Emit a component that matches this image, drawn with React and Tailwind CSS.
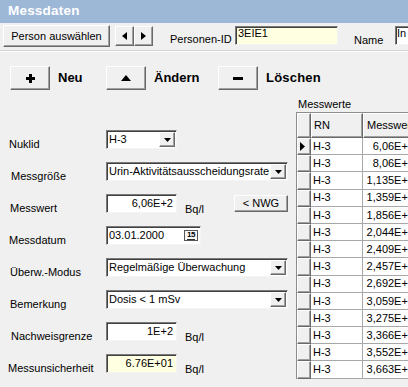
import React from "react";

const sunken =
  "border border-t-[#7a7a7a] border-l-[#7a7a7a] border-r-[#f4f4f4] border-b-[#f4f4f4] shadow-[inset_1px_1px_0_#404040]";
const raised =
  "border border-t-white border-l-white border-r-[#696969] border-b-[#696969] shadow-[inset_-1px_-1px_0_#a0a0a0]";

function DropBtn() {
  return (
    <div className={`w-[16px] h-full bg-[#f0f0f0] ${raised} flex items-center justify-center shrink-0`}>
      <svg width="7" height="4" viewBox="0 0 7 4">
        <polygon points="0,0 7,0 3.5,4" fill="#000" />
      </svg>
    </div>
  );
}

function Select({ className, text }) {
  return (
    <div className={`h-[19px] shrink-0 bg-white ${sunken} flex items-stretch p-[1px] ${className}`}>
      <div className="flex-1 pl-[1px] leading-[15px] text-[11px] whitespace-nowrap overflow-hidden">{text}</div>
      <DropBtn />
    </div>
  );
}

function Input({ className, text, bg = "bg-white" }) {
  return (
    <div className={`h-[19px] shrink-0 ${bg} ${sunken} flex items-center justify-end pr-[3px] text-[11px] ${className}`}>
      {text}
    </div>
  );
}

function Row({ label, lpad, children }) {
  return (
    <div className="h-[32px] flex items-start">
      <div className={`w-[106px] shrink-0 pt-[8px] leading-[13px] text-[11px] whitespace-nowrap ${lpad}`}>{label}</div>
      {children}
    </div>
  );
}

const vals = [
  "6,06E+2",
  "8,06E+2",
  "1,135E+3",
  "1,359E+3",
  "1,856E+3",
  "2,044E+3",
  "2,409E+3",
  "2,457E+3",
  "2,692E+3",
  "3,059E+3",
  "3,275E+3",
  "3,366E+3",
  "3,552E+3",
  "3,663E+3",
];

export default function App() {
  return (
    <div className="w-[408px] h-[387px] overflow-hidden bg-[#f0f0f0] text-black font-['Liberation_Sans',Arial,sans-serif] text-[11px]">
      {/* Title */}
      <div className="h-[23px] bg-[#9db7d6] flex items-center pl-[8px] text-white font-bold text-[13.5px] tracking-[0.2px]">
        Messdaten
      </div>

      {/* Toolbar */}
      <div className="h-[28px] flex items-start border-b border-[#d4d4d4] shadow-[0_1px_0_#ffffff] whitespace-nowrap overflow-hidden">
        <div className={`ml-[3px] mt-[2px] w-[107px] h-[22px] shrink-0 bg-[#f0f0f0] ${raised} flex items-center justify-center text-[11px]`}>
          Person auswählen
        </div>
        <div className={`ml-[5px] mt-[3px] w-[19px] h-[20px] shrink-0 bg-[#f0f0f0] ${raised} flex items-center justify-center`}>
          <svg width="5" height="8" viewBox="0 0 5 8">
            <polygon points="5,0 5,8 0,4" fill="#000" />
          </svg>
        </div>
        <div className={`mt-[3px] w-[19px] h-[20px] shrink-0 bg-[#f0f0f0] ${raised} flex items-center justify-center`}>
          <svg width="5" height="8" viewBox="0 0 5 8">
            <polygon points="0,0 0,8 5,4" fill="#000" />
          </svg>
        </div>
        <div className="ml-[17px] mt-[10px] w-[65px] shrink-0 leading-[13px]">Personen-ID</div>
        <div className={`mt-[3px] w-[103px] h-[19px] shrink-0 bg-[#ffffe1] ${sunken} pl-[2px] leading-[12px] text-[11px]`}>3EIE1</div>
        <div className="ml-[16px] mt-[11px] w-[41px] shrink-0 leading-[13px]">Name</div>
        <div className={`mt-[3px] w-[40px] h-[19px] bg-white ${sunken} pl-[1px] leading-[12px] text-[11px] shrink-0`}>In</div>
      </div>

      {/* Action row */}
      <div className="mt-[15px] h-[24px] flex items-center whitespace-nowrap">
        <div className={`ml-[10px] w-[40px] h-[24px] shrink-0 bg-[#f0f0f0] ${raised} flex items-center justify-center`}>
          <svg width="9" height="9" viewBox="0 0 9 9">
            <rect x="3" y="0" width="3" height="9" fill="#000" />
            <rect x="0" y="3" width="9" height="3" fill="#000" />
          </svg>
        </div>
        <div className="ml-[8px] w-[48px] shrink-0 font-bold text-[13px] leading-[16px]">Neu</div>
        <div className={`w-[40px] h-[24px] shrink-0 bg-[#f0f0f0] ${raised} flex items-center justify-center`}>
          <svg width="10" height="6" viewBox="0 0 10 6">
            <polygon points="0,6 10,6 5,0" fill="#000" />
          </svg>
        </div>
        <div className="ml-[8px] w-[64px] shrink-0 font-bold text-[13px] leading-[16px]">Ändern</div>
        <div className={`w-[40px] h-[24px] shrink-0 bg-[#f0f0f0] ${raised} flex items-center justify-center`}>
          <svg width="10" height="3" viewBox="0 0 10 3">
            <rect x="0" y="0" width="10" height="3" fill="#000" />
          </svg>
        </div>
        <div className="ml-[8px] font-bold text-[13px] leading-[16px] tracking-[0.2px]">Löschen</div>
      </div>

      {/* Body */}
      <div className="flex">
        {/* Form */}
        <div className="w-[296px] pt-[40px] shrink-0">
          <Row label="Nuklid" lpad="pl-[9px]">
            <Select className="w-[71px]" text="H-3" />
          </Row>
          <Row label="Messgröße" lpad="pl-[11px]">
            <Select className="w-[182px]" text="Urin-Aktivitätsausscheidungsrate" />
          </Row>
          <Row label="Messwert" lpad="pl-[10px]">
            <Input className="w-[71px]" text="6,06E+2" />
            <div className="ml-[8px] mt-[9px] leading-[13px]">Bq/l</div>
            <div className={`ml-[30px] mt-[1px] w-[54px] h-[17px] shrink-0 bg-[#f0f0f0] ${raised} flex items-center justify-center`}>
              &lt; NWG
            </div>
          </Row>
          <Row label="Messdatum" lpad="pl-[9px]">
            <div className={`w-[95px] h-[19px] shrink-0 bg-white ${sunken} flex items-center pl-[2px] text-[11px]`}>
              <span className="flex-1">03.01.2000</span>
              <div className="mr-[2px] w-[14px] h-[11px] border border-[#555] bg-[#f8f8f8] flex items-center justify-center">
                <span className="text-[8px] font-bold leading-[8px] tracking-[-0.5px] border-b border-[#333]">15</span>
              </div>
            </div>
          </Row>
          <Row label="Überw.-Modus" lpad="pl-[10px]">
            <Select className="w-[182px]" text="Regelmäßige Überwachung" />
          </Row>
          <Row label="Bemerkung" lpad="pl-[10px]">
            <Select className="w-[182px]" text="Dosis < 1 mSv" />
          </Row>
          <Row label="Nachweisgrenze" lpad="pl-[11px]">
            <Input className="w-[71px]" text="1E+2" />
            <div className="ml-[8px] mt-[9px] leading-[13px]">Bq/l</div>
          </Row>
          <Row label="Messunsicherheit" lpad="pl-[8px]">
            <Input className="w-[71px]" text="6.76E+01" bg="bg-[#ffffe1]" />
            <div className="ml-[8px] mt-[9px] leading-[13px]">Bq/l</div>
          </Row>
        </div>

        {/* Grid */}
        <div className="w-[112px] shrink-0 overflow-hidden">
          <div className="mt-[8px] pl-[2px] leading-[13px] whitespace-nowrap">Messwerte</div>
          <div className="mt-[1px] w-[130px] border-l border-t border-[#8c8c8c]">
            <div className="flex h-[25px]">
              <div className={`w-[14px] h-full shrink-0 bg-[#f0f0f0] ${raised}`} />
              <div className={`w-[52px] h-full shrink-0 bg-[#f0f0f0] ${raised} pl-[2px] flex items-center`}>RN</div>
              <div className={`w-[64px] h-full shrink-0 bg-[#f0f0f0] ${raised} pl-[3px] flex items-center whitespace-nowrap`}>Messwert</div>
            </div>
            {vals.map((v, i) => (
              <div key={i} className="flex h-[17.2px]">
                <div className={`w-[14px] h-full shrink-0 bg-[#f0f0f0] ${raised} flex items-center pl-[2px]`}>
                  {i === 0 && (
                    <svg width="5" height="9" viewBox="0 0 5 9">
                      <polygon points="0,0 5,4.5 0,9" fill="#000" />
                    </svg>
                  )}
                </div>
                <div className="w-[52px] h-full shrink-0 bg-white border-r border-b border-[#a8a8a8] pl-[2px] flex items-center">H-3</div>
                <div className="w-[54px] h-full shrink-0 bg-white border-r border-b border-[#a8a8a8] pr-[2px] flex items-center justify-end whitespace-nowrap">
                  {v}
                </div>
              </div>
            ))}
          </div>
        </div>
      </div>
    </div>
  );
}
